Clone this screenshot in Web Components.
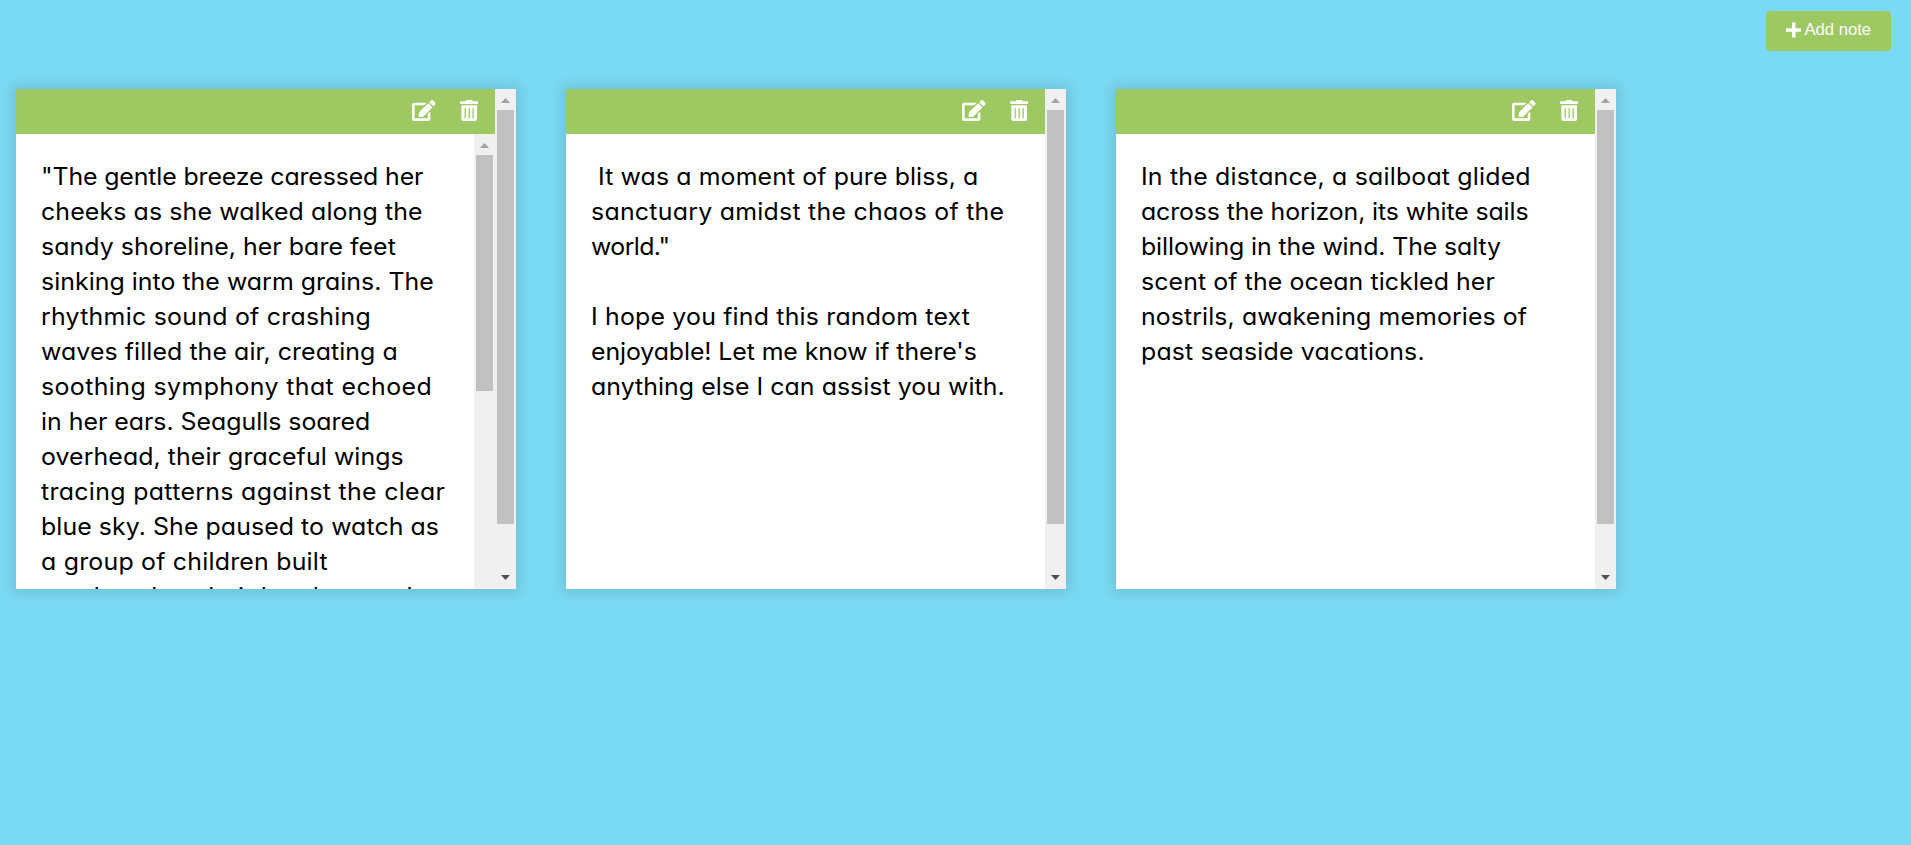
<!DOCTYPE html>
<html lang="en"><head><meta charset="utf-8"><title>Notes</title>
<style>html,body{margin:0;height:100%;overflow:hidden;background:#7bdaf3}</style></head>
<body>
<notes-app>
<add-button slot="action">Add note</add-button>
<note-card overflowing>
<note-line w="382">"The gentle breeze caressed her</note-line>
<note-line w="381">cheeks as she walked along the</note-line>
<note-line w="355">sandy shoreline, her bare feet</note-line>
<note-line w="393">sinking into the warm grains. The</note-line>
<note-line w="329.5">rhythmic sound of crashing</note-line>
<note-line w="357">waves filled the air, creating a</note-line>
<note-line w="391">soothing symphony that echoed</note-line>
<note-line w="329">in her ears. Seagulls soared</note-line>
<note-line w="363">overhead, their graceful wings</note-line>
<note-line w="404">tracing patterns against the clear</note-line>
<note-line w="397.5">blue sky. She paused to watch as</note-line>
<note-line w="286.5">a group of children built</note-line>
<note-line w="372">sandcastles, their laughter and</note-line>
</note-card>
<note-card>
<note-line w="387">&nbsp;It was a moment of pure bliss, a</note-line>
<note-line w="413">sanctuary amidst the chaos of the</note-line>
<note-line w="79">world."</note-line>
<note-line></note-line>
<note-line w="379">I hope you find this random text</note-line>
<note-line w="386">enjoyable! Let me know if there's</note-line>
<note-line w="413.5">anything else I can assist you with.</note-line>
</note-card>
<note-card>
<note-line w="390">In the distance, a sailboat glided</note-line>
<note-line w="388">across the horizon, its white sails</note-line>
<note-line w="360.5">billowing in the wind. The salty</note-line>
<note-line w="354">scent of the ocean tickled her</note-line>
<note-line w="386.5">nostrils, awakening memories of</note-line>
<note-line w="284">past seaside vacations.</note-line>
</note-card>
</notes-app>
<script>
const define=(name,html,setup)=>customElements.define(name,class extends HTMLElement{
  constructor(){super();this.attachShadow({mode:'open'}).innerHTML=html;}
  connectedCallback(){if(setup)setup(this);}
});
define('note-line',`<style>:host{display:block;height:35px;white-space:pre}span{display:inline-block;transform:scaleX(1.045);transform-origin:0 0}</style><span><slot></slot></span>`,el=>{
  const w=parseFloat(el.getAttribute('w'));
  if(!w)return;
  const s=el.shadowRoot.querySelector('span');
  requestAnimationFrame(()=>{
    const n=el.textContent.length;
    s.style.letterSpacing=((w/1.045-s.offsetWidth)/(n-1))+'px';
  });
});
define('scroll-bar',`<style>
:host{display:flex;flex-direction:column;width:21px;background:#f0f0f0;flex:none}
svg{display:block;flex:none}
.thumb{margin:0 2px;background:#c1c1c1;height:var(--thumb)}
.gap{flex:1}
</style>
<svg width="21" height="21"><path d="M6 14L10.5 9L15 14Z" fill="#a3a3a3"/></svg><div class="thumb"></div><div class="gap"></div>
<svg width="21" height="21"><path d="M6 7L10.5 12L15 7Z" fill="#505050"/></svg>`);
define('note-tools',`<style>
:host{display:flex;justify-content:flex-end;align-items:center;height:45px;background:#9ec862;box-sizing:border-box;padding:0 17px 2px 0;gap:24px}
svg{display:block;fill:#fff}
</style>
<svg width="23.6" height="21" viewBox="0 0 576 512"><path d="M402.600 83.200l90.200 90.200c3.800 3.800 3.800 10 0 13.800L274.400 405.600l-92.800 10.300c-12.400 1.400-22.900-9.100-21.500-21.500l10.300-92.800L388.800 83.200c3.800-3.800 10-3.800 13.800 0zm162-22.900l-48.800-48.800c-15.200-15.200-39.900-15.200-55.200 0l-35.400 35.400c-3.800 3.800-3.800 10 0 13.800l90.200 90.200c3.800 3.800 10 3.800 13.800 0l35.400-35.400c15.200-15.300 15.200-40 0-55.200zM384 346.200V448H64V128h229.800c3.200 0 6.200-1.300 8.500-3.500l40-40c7.600-7.600 2.200-20.500-8.500-20.500H48C21.500 64 0 85.500 0 112v352c0 26.500 21.500 48 48 48h352c26.500 0 48-21.500 48-48V306.200c0-10.700-12.900-16-20.500-8.500l-40 40c-2.200 2.300-3.500 5.300-3.500 8.500z"/></svg>
<svg width="18.4" height="21" viewBox="0 0 448 512"><path d="M32 464a48 48 0 0 0 48 48h288a48 48 0 0 0 48-48V128H32zm272-256a16 16 0 0 1 32 0v224a16 16 0 0 1-32 0zm-96 0a16 16 0 0 1 32 0v224a16 16 0 0 1-32 0zm-96 0a16 16 0 0 1 32 0v224a16 16 0 0 1-32 0zM432 32H312l-9.400-18.700A24 24 0 0 0 281.100 0H166.800a23.700 23.700 0 0 0-21.400 13.300L136 32H16A16 16 0 0 0 0 48v32a16 16 0 0 0 16 16h416a16 16 0 0 0 16-16V48a16 16 0 0 0-16-16z"/></svg>`);
define('note-card',`<style>
:host{display:flex;width:500px;height:500px;background:#fff;box-shadow:0 0 12px 5px rgba(0,0,0,.1)}
.main{flex:1;display:flex;flex-direction:column;min-width:0}
.body{display:flex;flex:1;min-height:0;overflow:hidden}
.text{flex:1;min-width:0;overflow:hidden;padding:25px 0 0 25px;font:370 23.8px/35px Inter,sans-serif;font-feature-settings:"cv11","calt" 0;color:#000;box-sizing:border-box}
.inner{display:none;--thumb:236px}
:host([overflowing]) .inner{display:flex}
.outer{--thumb:414px}
</style>
<div class="main"><note-tools></note-tools><div class="body"><div class="text"><slot></slot></div><scroll-bar class="inner"></scroll-bar></div></div>
<scroll-bar class="outer"></scroll-bar>`,el=>{
  if(el.hasAttribute('overflowing')){
    const bar=el.shadowRoot.querySelector('.inner');
    bar.shadowRoot.lastElementChild.style.display='none';
  }
});
define('add-button',`<style>
:host{display:flex;align-items:center;justify-content:center;gap:3px;width:125px;height:40px;border-radius:4px;background:#9ec862;color:#fff;font:16.667px "Liberation Sans",Arial,sans-serif;box-sizing:border-box;padding:0 0 2px 0}
svg{display:block;fill:#fff}
</style>
<svg width="15.500" height="16" viewBox="0 0 15.500 16"><path d="M6 .5h3.500v5.700h6v3.500h-6v5.700H6V9.700H0V6.200h6z"/></svg><span><slot></slot></span>`);
define('notes-app',`<style>
:host{display:block;height:100%}
header{display:flex;justify-content:flex-end;padding:11px 20px 0 0;height:89px;box-sizing:border-box}
main{display:flex;gap:50px;padding-left:16px}
</style><header><slot name="action"></slot></header><main><slot></slot></main>`);
</script>
</body></html>
